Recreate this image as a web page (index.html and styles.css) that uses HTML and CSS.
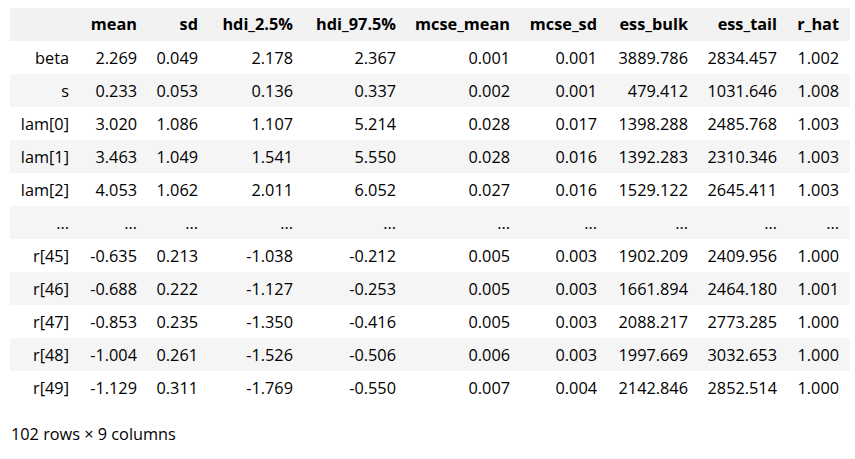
FILE: index.html
```html
<!DOCTYPE html>
<html>
<head>
<meta charset="utf-8">
<link rel="stylesheet" href="styles.css">
</head>
<body>
<div class="output">
<table class="dataframe">
<colgroup>
<col class="c-idx"><col class="c-mean"><col class="c-sd"><col class="c-hdi1"><col class="c-hdi2"><col class="c-mm"><col class="c-ms"><col class="c-eb"><col class="c-et"><col class="c-rh">
</colgroup>
<thead>
<tr><th></th><th>mean</th><th>sd</th><th>hdi_2.5%</th><th>hdi_97.5%</th><th>mcse_mean</th><th>mcse_sd</th><th>ess_bulk</th><th>ess_tail</th><th>r_hat</th></tr>
</thead>
<tbody>
<tr><th>beta</th><td>2.269</td><td>0.049</td><td>2.178</td><td>2.367</td><td>0.001</td><td>0.001</td><td>3889.786</td><td>2834.457</td><td>1.002</td></tr>
<tr><th>s</th><td>0.233</td><td>0.053</td><td>0.136</td><td>0.337</td><td>0.002</td><td>0.001</td><td>479.412</td><td>1031.646</td><td>1.008</td></tr>
<tr><th>lam[0]</th><td>3.020</td><td>1.086</td><td>1.107</td><td>5.214</td><td>0.028</td><td>0.017</td><td>1398.288</td><td>2485.768</td><td>1.003</td></tr>
<tr><th>lam[1]</th><td>3.463</td><td>1.049</td><td>1.541</td><td>5.550</td><td>0.028</td><td>0.016</td><td>1392.283</td><td>2310.346</td><td>1.003</td></tr>
<tr><th>lam[2]</th><td>4.053</td><td>1.062</td><td>2.011</td><td>6.052</td><td>0.027</td><td>0.016</td><td>1529.122</td><td>2645.411</td><td>1.003</td></tr>
<tr><th>...</th><td>...</td><td>...</td><td>...</td><td>...</td><td>...</td><td>...</td><td>...</td><td>...</td><td>...</td></tr>
<tr><th>r[45]</th><td>-0.635</td><td>0.213</td><td>-1.038</td><td>-0.212</td><td>0.005</td><td>0.003</td><td>1902.209</td><td>2409.956</td><td>1.000</td></tr>
<tr><th>r[46]</th><td>-0.688</td><td>0.222</td><td>-1.127</td><td>-0.253</td><td>0.005</td><td>0.003</td><td>1661.894</td><td>2464.180</td><td>1.001</td></tr>
<tr><th>r[47]</th><td>-0.853</td><td>0.235</td><td>-1.350</td><td>-0.416</td><td>0.005</td><td>0.003</td><td>2088.217</td><td>2773.285</td><td>1.000</td></tr>
<tr><th>r[48]</th><td>-1.004</td><td>0.261</td><td>-1.526</td><td>-0.506</td><td>0.006</td><td>0.003</td><td>1997.669</td><td>3032.653</td><td>1.000</td></tr>
<tr><th>r[49]</th><td>-1.129</td><td>0.311</td><td>-1.769</td><td>-0.550</td><td>0.007</td><td>0.004</td><td>2142.846</td><td>2852.514</td><td>1.000</td></tr>
</tbody>
</table>
<p class="shape">102 rows × 9 columns</p>
</div>
</body>
</html>
```
FILE: styles.css
```css
html, body {
  background: #ffffff;
}
body {
  margin: 8px 4px 0 10px;
  font-family: "Open Sans", "Noto Sans", sans-serif;
  font-size: 16.3px;
  color: #000000;
}
.dataframe {
  border-collapse: collapse;
  border-spacing: 0;
  table-layout: fixed;
  width: 840px;
}
.c-idx { width: 70px; }
.c-mean { width: 68px; }
.c-sd { width: 61px; }
.c-hdi1 { width: 95px; }
.c-hdi2 { width: 103px; }
.c-mm { width: 114px; }
.c-ms { width: 87px; }
.c-eb { width: 91px; }
.c-et { width: 89px; }
.c-rh { width: 62px; }
.dataframe tr {
  height: 33px;
}
.dataframe th,
.dataframe td {
  box-sizing: border-box;
  text-align: right;
  padding: 0 11px 0 0;
  line-height: 20px;
  white-space: nowrap;
  vertical-align: middle;
  border: none;
}
.dataframe thead tr {
  height: 32.7px;
}
.dataframe thead th {
  font-weight: bold;
  background: #f2f2f2;
}
.dataframe tbody th {
  font-weight: normal;
  padding-top: 1px;
}
.dataframe tbody td {
  padding-top: 1px;
}
.dataframe tbody tr:nth-child(even) {
  background: #f5f5f5;
}
.shape {
  margin: 19px 0 0 1px;
  line-height: 22px;
}
```
